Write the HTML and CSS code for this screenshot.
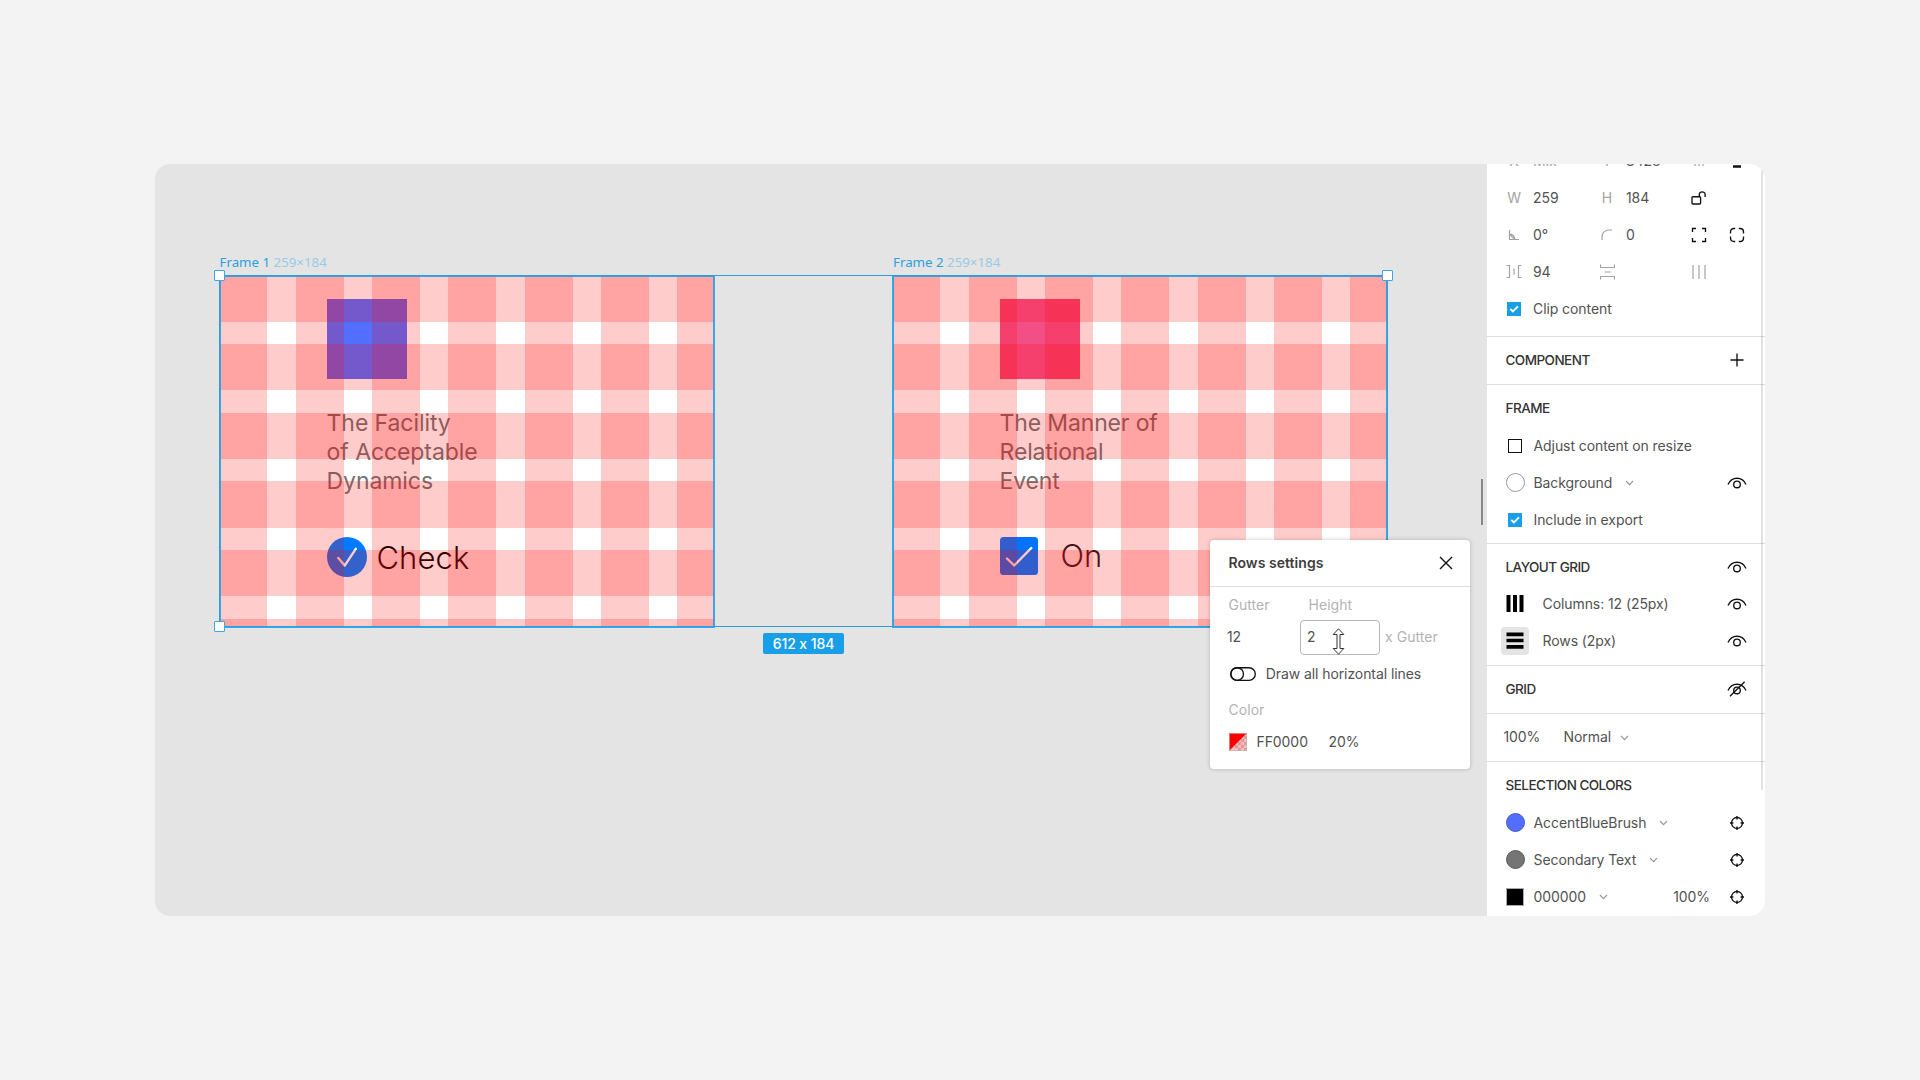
FILE: index.html
```html
<!DOCTYPE html>
<html lang="en">
<head>
<meta charset="utf-8">
<title>Layout grid editor</title>
<link rel="stylesheet" href="styles.css">
</head>
<body>
<svg class="sprite" aria-hidden="true">
  <symbol id="eye" viewBox="0 0 20 14"><path d="M1 8.6C3 3.8 6.4 2.2 10 2.2s7 1.6 9 6.4"/><circle cx="10" cy="8.4" r="3.3"/></symbol>
  <symbol id="eye-off" viewBox="0 0 20 16"><path d="M1 9.6C3 4.8 6.4 3.2 10 3.2s7 1.6 9 6.4M3 15.2 17.6.8"/><circle cx="10" cy="9.4" r="3.3"/></symbol>
  <symbol id="chevron" viewBox="0 0 9 6"><path d="M1 1l3.5 3.7L8 1"/></symbol>
  <symbol id="target" viewBox="0 0 14 14"><circle cx="7" cy="7" r="5.5"/><path d="M7 0v3.4M7 10.600V14M0 7h3.400M10.600 7H14"/></symbol>
  <symbol id="tick" viewBox="0 0 14 14"><path d="M3.3 6.8l2.6 2.6 5-5"/></symbol>
</svg>
<div class="app">
  <main class="canvas">
    <div class="label label-1">Frame 1 <span>259×184</span></div>
    <div class="label label-2">Frame 2 <span>259×184</span></div>

    <section class="frame frame-1">
      <div class="square blue"></div>
      <p class="copy">The Facility<br>of Acceptable<br>Dynamics</p>
      <div class="choice">
        <svg width="40" height="40" viewBox="0 0 40 40"><circle cx="20" cy="20" r="20" fill="#007aff"/><path class="mark" d="M11.3 21l6.4 7.6L28.800 11.800"/></svg>
        <span class="check-text">Check</span>
      </div>
      <div class="overlay"></div>
    </section>
    <section class="frame frame-2">
      <div class="square pink"></div>
      <p class="copy">The Manner of<br>Relational<br>Event</p>
      <div class="choice">
        <svg width="38" height="38" viewBox="0 0 38 38"><rect width="38" height="38" rx="3.500" fill="#0073ff"/><path class="mark" d="M7 21.500l7.200 7L31.300 11"/></svg>
        <span class="on-text">On</span>
      </div>
      <div class="overlay"></div>
    </section>

    <div class="selection"></div>
    <i class="handle tl"></i><i class="handle tr"></i><i class="handle bl"></i>
    <div class="badge">612 x 184</div>
    <i class="splitter"></i>
  </main>

  <aside class="panel">
    <section class="section transform">
      <div class="grid-row">
        <span class="key">X</span><span class="val dim">Mix</span><span class="key">Y</span><span class="val">3428</span>
        <span class="key">...</span><i></i><svg class="ink" width="10" height="14" viewBox="0 0 10 14"><path d="M1 12.500h8" stroke-width="2.500"/></svg>
      </div>
      <div class="grid-row">
        <span class="key">W</span><span class="val">259</span><span class="key">H</span><span class="val">184</span>
        <svg class="ink" width="16" height="14" viewBox="0 0 16 14"><rect x="1" y="5.700" width="8.600" height="7.300" rx="1"/><path d="M8.300 5.500V3.300c0-3.200 5.800-3.200 5.800 0V6"/></svg>
      </div>
      <div class="grid-row">
        <svg class="gray" width="12" height="12" viewBox="0 0 12 12"><path d="M1.500 1v9.500H11M1.500 5.200c3 0 5 2 5.400 5.300" /><path d="M1.500 5.200l5.400 5.300"/></svg><span class="val">0°</span>
        <svg class="gray" width="12" height="12" viewBox="0 0 12 12"><path d="M1 11V8c0-4.500 3-7 7-7h3"/></svg><span class="val">0</span>
        <svg class="ink" width="16" height="16" viewBox="0 0 16 16"><path d="M1.500 5V1.500H5M11 1.500h3.500V5M14.500 11v3.500H11M5 14.500H1.500V11"/></svg><i></i>
        <svg class="ink" width="16" height="16" viewBox="0 0 16 16"><path d="M1.500 6.500V5Q1.500 1.500 5 1.500h1.200M9.800 1.500H11q3.500 0 3.500 3.500v1.500M14.500 9.500V11q0 3.500-3.500 3.500H9.800M6.200 14.500H5Q1.500 14.500 1.500 11V9.500"/></svg>
      </div>
      <div class="grid-row">
        <svg class="gray" width="16" height="15" viewBox="0 0 16 15"><path d="M.5 1.500h3v12h-3M15.500 1.500h-3v12h3M8 4.500v6"/></svg><span class="val">94</span>
        <svg class="gray" width="15" height="16" viewBox="0 0 15 16"><path d="M.5.500v3h14v-3M.5 15.500v-3h14v3M4.500 8h6"/></svg><span class="val"></span>
        <svg class="gray" width="14" height="14" viewBox="0 0 14 14"><path d="M1 0v14M7 0v14M13 0v14"/></svg>
      </div>
      <div class="grid-row">
        <span class="box on"><svg width="14" height="14"><use href="#tick"/></svg></span><span class="val wide">Clip content</span>
      </div>
    </section>

    <section class="section single">
      <header>COMPONENT<svg class="ink end" width="14" height="14" viewBox="0 0 14 14"><path d="M7 .5v13M.5 7h13"/></svg></header>
    </section>

    <section class="section">
      <header>FRAME</header>
      <div class="row"><span class="slot"><span class="box"></span></span><span>Adjust content on resize</span></div>
      <div class="row"><span class="slot"><i class="dot empty"></i></span><span>Background</span><svg class="chev" width="9" height="6"><use href="#chevron"/></svg><svg class="ink end" width="20" height="14"><use href="#eye"/></svg></div>
      <div class="row"><span class="slot"><span class="box on"><svg width="14" height="14"><use href="#tick"/></svg></span></span><span>Include in export</span></div>
    </section>

    <section class="section layout-grid">
      <header>LAYOUT GRID<svg class="ink end" width="20" height="14"><use href="#eye"/></svg></header>
      <div class="row deep"><span class="slot"><svg width="18" height="17" viewBox="0 0 18 17"><path d="M0.500 0h4v17h-4zM7 0h4v17H7zM13.500 0h4v17h-4z"/></svg></span><span>Columns: 12 (25px)</span><svg class="ink end" width="20" height="14"><use href="#eye"/></svg></div>
      <div class="row deep"><span class="slot active"><svg width="18" height="17" viewBox="0 0 18 17"><path d="M.5.500h17v3.800H.5zM.5 6.800h17v3.500H.5zM.5 13h17v3.800H.5z"/></svg></span><span>Rows (2px)</span><svg class="ink end" width="20" height="14"><use href="#eye"/></svg></div>
    </section>

    <section class="section single">
      <header>GRID<svg class="ink end" width="20" height="16"><use href="#eye-off"/></svg></header>
    </section>

    <section class="section single blend">
      <span class="opacity">100%</span><span>Normal</span><svg class="chev" width="9" height="6"><use href="#chevron"/></svg>
    </section>

    <section class="section colors">
      <header>SELECTION COLORS</header>
      <div class="row"><span class="slot"><i class="dot accent"></i></span><span>AccentBlueBrush</span><svg class="chev" width="9" height="6"><use href="#chevron"/></svg><svg class="ink end" width="14" height="14"><use href="#target"/></svg></div>
      <div class="row"><span class="slot"><i class="dot secondary"></i></span><span>Secondary Text</span><svg class="chev" width="9" height="6"><use href="#chevron"/></svg><svg class="ink end" width="14" height="14"><use href="#target"/></svg></div>
      <div class="row"><span class="slot"><i class="black"></i></span><span>000000</span><svg class="chev" width="9" height="6"><use href="#chevron"/></svg><span class="percent">100%</span><svg class="ink end near" width="14" height="14"><use href="#target"/></svg></div>
    </section>
    <i class="scrollbar"></i>
  </aside>

  <div class="popup">
    <div class="popup-head">Rows settings<svg class="ink" width="14" height="14" viewBox="0 0 14 14"><path d="M1 1l12 12M13 1L1 13"/></svg></div>
    <div class="fields caption"><span>Gutter</span><span>Height</span></div>
    <div class="fields inputs"><span class="gutter-value">12</span><span class="input">2</span><span class="caption unit">x Gutter</span></div>
    <div class="toggle-row"><svg class="ink" width="26" height="14" viewBox="0 0 26 14"><rect x=".7" y=".7" width="24.600" height="12.600" rx="6.300"/><circle cx="7.200" cy="7" r="6.300"/></svg><span>Draw all horizontal lines</span></div>
    <div class="caption color-title">Color</div>
    <div class="color-row">
      <svg width="18" height="18" viewBox="0 0 18 18"><path fill="#fbb" d="M0 0h18v18H0z"/><path fill="#dd9c9c" d="M12 6h3v3h-3zM9 9h3v3H9zM15 9h3v3h-3zM6 12h3v3H6zM12 12h3v3h-3zM9 15h3v3H9zM15 15h3v3h-3zM15 3h3v3h-3z"/><path fill="red" d="M0 0h18L0 18z"/><path fill="none" stroke="#bbb" stroke-opacity=".7" d="M.5.500h17v17H.5z"/></svg>
      <span class="hex">FF0000</span><span>20%</span>
    </div>
    <svg class="cursor" width="13" height="27" viewBox="0 0 13 27"><path fill="#fff" stroke="#333" d="M6.500.800l5.300 5.700H8v14h3.800l-5.300 5.700-5.300-5.700H5v-14H1.200z"/></svg>
  </div>
</div>
</body>
</html>
```
FILE: styles.css
```css
* { box-sizing: border-box; }

body {
  margin: 0;
  height: 1080px;
  overflow: hidden;
  display: flex;
  align-items: flex-start;
  justify-content: center;
  padding-top: 164px;
  background: #f3f3f3;
  color: #525252;
  font: 14px/20px Inter, "Liberation Sans", sans-serif;
  letter-spacing: -0.08px;
}

.sprite { position: absolute; width: 0; height: 0; }
svg { display: block; flex: none; }
symbol, .ink { fill: none; }
.ink { stroke: #111; stroke-width: 1.35; }
.gray { fill: none; stroke: #a2a2a2; stroke-width: 1.2; }

.app {
  position: relative;
  width: 1610px;
  height: 752px;
  display: flex;
  border-radius: 15px;
  overflow: hidden;
  background: #e4e4e4;
}

/* Canvas */
.canvas { position: relative; width: 1332px; height: 752px; }

.label {
  position: absolute;
  top: 88px;
  font: 13.3px/20px "Noto Sans", "Open Sans", sans-serif;
  letter-spacing: 0;
  white-space: pre;
  color: #2ba0e0;
}
.label span { color: #99cbe5; }
.label-1 { left: 64.500px; }
.label-2 { left: 738px; }

.frame {
  position: absolute;
  top: 112px;
  width: 494px;
  height: 351px;
  padding: 23px 0 0 106.600px;
  background: #fff;
}
.frame-1 { left: 65px; }
.frame-2 { left: 738px; }

.overlay {
  position: absolute;
  inset: 0;
  background:
    repeating-linear-gradient(90deg, rgba(255,0,0,.2) 0 48px, transparent 48px 76.300px) -0.600px 0 / 500px 100% no-repeat,
    repeating-linear-gradient(180deg, rgba(255,0,0,.2) 0 46.300px, transparent 46.300px 68.700px) 0 -0.700px / 100% 360px no-repeat;
}

.square { width: 80px; height: 80px; }
.blue { background: #526fff; }
.pink { background: #f24f87; }

.copy {
  margin: 30px 0 0;
  font-size: 23px;
  line-height: 29px;
  letter-spacing: -0.080px;
  color: #737373;
}
.frame-2 .copy { letter-spacing: -0.150px; }

.choice { display: flex; align-items: flex-start; margin-top: 41px; }
.choice span { font-weight: 300; font-size: 31px; line-height: 40px; letter-spacing: 0.100px; color: #000; }
.choice .check-text { margin: 1px 0 0 9.800px; }
.choice .on-text { margin: -1px 0 0 22.800px; color: #1b1b1f; }
.mark { fill: none; stroke: #fff; stroke-width: 2.400; stroke-linecap: round; stroke-linejoin: round; }
.frame::after {
  content: "";
  position: absolute;
  inset: -1px;
  border: 2px solid rgba(24,160,232,.85);
}

.selection {
  position: absolute;
  left: 64px;
  top: 111px;
  width: 1169px;
  height: 352px;
  border: 1px solid #2b9fdf;
}
.handle {
  position: absolute;
  width: 11px;
  height: 11px;
  background: #fff;
  border: 1px solid #3aa9e6;
  border-radius: 1px;
}
.tl { left: 59px; top: 106px; }
.tr { left: 1227px; top: 106px; }
.bl { left: 59px; top: 457px; }

.badge {
  position: absolute;
  left: 608px;
  top: 469px;
  width: 81px;
  height: 21px;
  border-radius: 2px;
  background: #189fe8;
  color: #fff;
  font-weight: 500;
  line-height: 21px;
  text-align: center;
}
.splitter {
  position: absolute;
  left: 1326px;
  top: 315px;
  width: 2px;
  height: 46px;
  background: #888;
}

/* Properties panel */
.panel {
  position: relative;
  width: 278px;
  height: 752px;
  background: #fff;
  overflow: hidden;
}
.section {
  display: flex;
  flex-direction: column;
  padding: 4px 0 5px;
  border-bottom: 1px solid #dedede;
}
.transform { height: 173px; justify-content: flex-end; padding: 0 0 9px; }
.single { height: 48px; }
.layout-grid { height: 122px; }
.colors { border: 0; }

.grid-row {
  flex: none;
  height: 37px;
  display: grid;
  grid-template-columns: 26px 67px 26px 66px 26px 12px 26px;
  align-items: center;
  justify-items: center;
  padding-left: 14px;
}
.key { color: #a3a3a3; }
.val { justify-self: start; padding-left: 6px; white-space: nowrap; }
.dim { color: #a3a3a3; }

header {
  height: 38px;
  display: flex;
  align-items: center;
  padding: 0 21px 0 18.500px;
  color: #333;
  font-weight: 500;
  font-size: 13.500px;
  letter-spacing: -0.530px;
}
header .end, .row .end { margin-left: auto; }
header svg[width="20"] { margin-right: -3px; }
.row {
  height: 37px;
  display: flex;
  align-items: center;
  padding: 0 21px 0 14px;
}
.row svg[width="20"] { margin-right: -3px; }
.slot {
  width: 28px;
  height: 28px;
  margin-right: 4.500px;
  display: grid;
  place-items: center;
}
.deep { position: relative; top: -1px; }
.deep .slot { margin-right: 13.500px; }
.active { background: #e4e4e4; border-radius: 4px; }
.chev { margin: 1px 0 0 13px; fill: none; stroke: #999; stroke-width: 1.200; }
.box {
  width: 14px;
  height: 14px;
  display: block;
  border: 1.300px solid #111;
}
.box.on { border: 0; background: #189fe8; }
.box svg { fill: none; stroke: #fff; stroke-width: 1.900; }
.dot { width: 19px; height: 19px; border-radius: 50%; border: 1px solid; }
.empty { border-color: #999; }
.accent { background: #526fff; border-color: #4357c4; }
.secondary { background: #757575; border-color: #5a5a5a; }
.black { width: 18px; height: 18px; background: #000; border: 1px solid #aaa; }
.blend { flex-direction: row; align-items: center; padding-left: 16.500px; }
.opacity { width: 60px; }
.blend .chev { margin-left: 9px; }
.percent { margin-left: auto; }
.row .near { margin-left: 20px; }
.scrollbar {
  position: absolute;
  right: 2px;
  top: 6px;
  width: 2px;
  height: 620px;
  background: rgba(0,0,0,.11);
}

/* Rows settings popup */
.popup {
  position: absolute;
  left: 1055px;
  top: 376px;
  width: 260px;
  height: 229px;
  border-radius: 4px;
  background: #fff;
  box-shadow: 0 0 4px rgba(0,0,0,.22);
}
.popup-head {
  height: 47px;
  display: flex;
  align-items: center;
  justify-content: space-between;
  padding: 0 17px 0 18.500px;
  border-bottom: 1px solid #dedede;
  color: #3d3d3d;
  font-weight: 600;
  letter-spacing: 0.050px;
}
.caption { color: #b3b3b3; letter-spacing: 0.050px; }
.fields { display: flex; align-items: center; }
.fields.caption { height: 34px; padding: 2px 0 0 18.500px; }
.fields.caption span { width: 80px; }
.inputs { height: 32px; padding-left: 17px; }
.gutter-value { width: 73px; }
.input {
  width: 80px;
  height: 35px;
  border: 1px solid #b8b8b8;
  border-radius: 4px;
  padding: 0 6px;
  line-height: 32px;
}
.unit { padding-left: 5px; }
.toggle-row { display: flex; align-items: center; height: 42px; padding-left: 20px; }
.toggle-row span { margin-left: 9.700px; }
.color-title { height: 30px; line-height: 30px; padding-left: 18.500px; }
.color-row { display: flex; align-items: center; height: 34px; padding-left: 19px; }
.hex { width: 72px; margin-left: 9.500px; }
.cursor { position: absolute; left: 121.500px; top: 88px; }
```
